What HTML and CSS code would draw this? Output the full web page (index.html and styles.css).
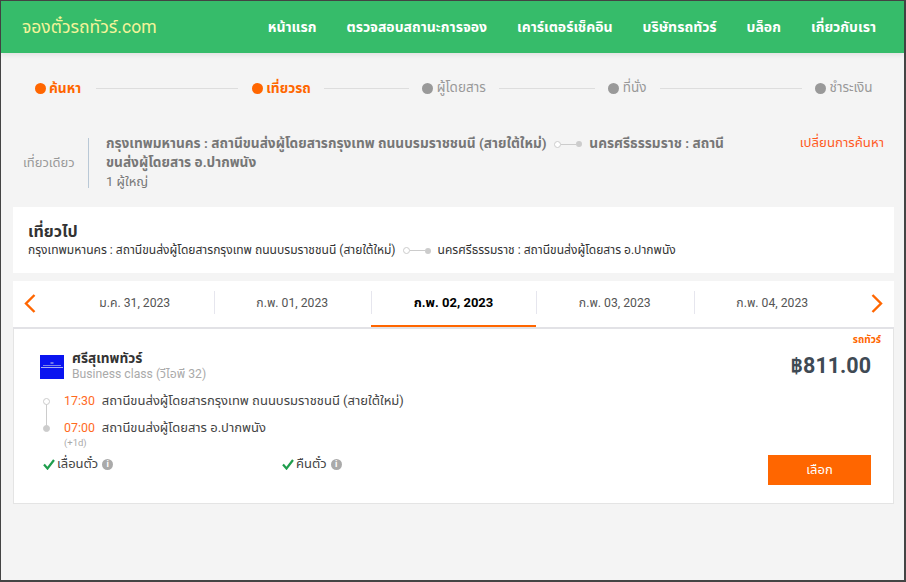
FILE: index.html
```html
<!DOCTYPE html>
<html lang="th">

<head>
    <meta charset="UTF-8">
    <title>จองตั๋วรถทัวร์.com</title>
    <link rel="stylesheet" href="styles.css">
</head>

<body>
    <div class="frame">
        <header class="top-bar">
            <a class="logo">จองตั๋วรถทัวร์.com</a>
            <nav class="menu">
                <a>หน้าแรก</a>
                <a>ตรวจสอบสถานะการจอง</a>
                <a>เคาร์เตอร์เช็คอิน</a>
                <a>บริษัทรถทัวร์</a>
                <a>บล็อก</a>
                <a>เกี่ยวกับเรา</a>
            </nav>
        </header>

        <div class="steps">
            <span class="step active"><i class="dot"></i>ค้นหา</span>
            <span class="step-line line-1"></span>
            <span class="step active"><i class="dot"></i>เที่ยวรถ</span>
            <span class="step-line line-2"></span>
            <span class="step"><i class="dot"></i>ผู้โดยสาร</span>
            <span class="step-line line-3"></span>
            <span class="step"><i class="dot"></i>ที่นั่ง</span>
            <span class="step-line line-4"></span>
            <span class="step"><i class="dot"></i>ชำระเงิน</span>
        </div>

        <div class="summary">
            <div class="trip-type">เที่ยวเดียว</div>
            <div class="trip-info">
                <div class="trip-route">กรุงเทพมหานคร : สถานีขนส่งผู้โดยสารกรุงเทพ ถนนบรมราชชนนี (สายใต้ใหม่) <span class="arrow-line"><i class="hollow"></i><i class="bar"></i><i class="solid"></i></span> นครศรีธรรมราช : สถานีขนส่งผู้โดยสาร อ.ปากพนัง</div>
                <div class="trip-people">1 ผู้ใหญ่</div>
            </div>
            <a class="change-search">เปลี่ยนการค้นหา</a>
        </div>

        <section class="outbound">
            <h2>เที่ยวไป</h2>
            <p>กรุงเทพมหานคร : สถานีขนส่งผู้โดยสารกรุงเทพ ถนนบรมราชชนนี (สายใต้ใหม่) <span class="arrow-line"><i class="hollow"></i><i class="bar"></i><i class="solid"></i></span> นครศรีธรรมราช : สถานีขนส่งผู้โดยสาร อ.ปากพนัง</p>
        </section>

        <div class="dates">
            <button class="chevron prev">
                <svg width="12" height="19" viewBox="0 0 12 19"><path d="M10.5 1 L2 9.5 L10.5 18" fill="none" stroke="#ff6600" stroke-width="2.4"/></svg>
            </button>
            <div class="date-tab">ม.ค. 31, 2023</div>
            <div class="date-tab">ก.พ. 01, 2023</div>
            <div class="date-tab selected">ก.พ. 02, 2023</div>
            <div class="date-tab">ก.พ. 03, 2023</div>
            <div class="date-tab">ก.พ. 04, 2023</div>
            <button class="chevron next">
                <svg width="12" height="19" viewBox="0 0 12 19"><path d="M1.5 1 L10 9.5 L1.5 18" fill="none" stroke="#ff6600" stroke-width="2.4"/></svg>
            </button>
        </div>

        <section class="result">
            <div class="bus-type">รถทัวร์</div>
            <div class="result-head">
                <div class="company">
                    <svg class="company-logo" width="24" height="24" viewBox="0 0 24 24">
                        <rect width="24" height="24" fill="#0a14f0"/>
                        <rect x="10.500" y="7" width="3" height="2" fill="#6f78e8"/>
                        <rect x="3" y="10" width="18" height="1" fill="#7d86ea"/>
                        <rect x="1" y="12" width="22" height="1" fill="#aab0f0"/>
                    </svg>
                    <div>
                        <div class="company-name">ศรีสุเทพทัวร์</div>
                        <div class="company-class">Business class (วีไอพี 32)</div>
                    </div>
                </div>
                <div class="price">฿811.00</div>
            </div>

            <div class="timeline">
                <div class="time-row">
                    <span class="time">17:30</span>
                    <span>สถานีขนส่งผู้โดยสารกรุงเทพ ถนนบรมราชชนนี (สายใต้ใหม่)</span>
                </div>
                <div class="time-row">
                    <span class="time">07:00</span>
                    <span>สถานีขนส่งผู้โดยสาร อ.ปากพนัง</span>
                </div>
                <div class="next-day">(+1d)</div>
            </div>

            <div class="result-foot">
                <div class="perk">
                    <svg width="12" height="11" viewBox="0 0 12 11"><path d="M1 5.5 L4.500 9.500 L11 1" fill="none" stroke="#1f9e4d" stroke-width="2.200"/></svg>
                    เลื่อนตั๋ว <i class="info">i</i>
                </div>
                <div class="perk">
                    <svg width="12" height="11" viewBox="0 0 12 11"><path d="M1 5.5 L4.500 9.500 L11 1" fill="none" stroke="#1f9e4d" stroke-width="2.200"/></svg>
                    คืนตั๋ว <i class="info">i</i>
                </div>
                <button class="select-btn">เลือก</button>
            </div>
        </section>
    </div>
</body>

</html>
```

FILE: styles.css
```css
html,
body {
    margin: 0;
    padding: 0;
    height: 100%;
    overflow: hidden;
}

body {
    font-family: Roboto, "Noto Sans Thai", "Noto Sans", "Liberation Sans", sans-serif;
    font-size: 13px;
    color: #444;
}

.frame {
    height: 100%;
    box-sizing: border-box;
    background-color: #f4f4f4;
    border: solid #444;
    border-width: 1px 2px 2px 1px;
}

.top-bar {
    display: flex;
    align-items: center;
    justify-content: space-between;
    height: 52px;
    padding: 0 28px 0 21px;
    background-color: #36bc6a;
    box-shadow: 0 2px 5px rgba(0, 0, 0, 0.08);
}

.logo {
    font-size: 17.5px;
    color: #f4f49a;
}

.menu {
    display: flex;
    gap: 30px;
}

.menu a {
    font-size: 14px;
    font-weight: bold;
    color: white;
}

/* booking steps */
.steps {
    display: flex;
    align-items: center;
    height: 20px;
    margin-top: 25px;
    padding: 0 33px 0 34px;
    color: #999;
}

.step {
    display: flex;
    align-items: center;
    gap: 4px;
    font-size: 13.5px;
    white-space: nowrap;
}

.step.active {
    gap: 3px;
    color: #ff6600;
    font-size: 13.7px;
    font-weight: bold;
}

.dot {
    width: 11px;
    height: 11px;
    border-radius: 50%;
    background-color: #999;
}

.step.active .dot {
    background-color: #ff6600;
}

.step-line {
    flex: none;
    height: 1px;
    margin: 0 13px;
    background-color: #ddd;
}

.line-1 { width: 142px; margin: 0 14px 0 15px; }
.line-2 { width: 85px; }
.line-3 { width: 96px; }
.line-4 { width: 142px; }

/* search summary */
.summary {
    display: flex;
    align-items: flex-start;
    margin-top: 36px;
    padding: 0 20px 0 22px;
}

.trip-type {
    align-self: center;
    width: 65px;
    font-size: 13px;
    color: #999;
}

.trip-info {
    position: relative;
    width: 630px;
    padding-left: 18px;
}

/* the rule is a little shorter than the three text lines */
.trip-info::before {
    content: '';
    position: absolute;
    left: 0;
    top: 4px;
    bottom: 3px;
    width: 1px;
    background-color: #b9c8d6;
}

.trip-route {
    font-size: 13.65px;
    line-height: 19px;
    font-weight: bold;
    color: #777;
}

.trip-people {
    font-size: 13px;
    line-height: 19px;
    color: #777;
}

.change-search {
    margin: -1px 0 0 auto;
    font-size: 13.2px;
    color: #ff5a1f;
}

.arrow-line {
    display: inline-flex;
    align-items: center;
    margin: 0 4px;
    vertical-align: middle;
}

.arrow-line .hollow {
    width: 5px;
    height: 5px;
    border: 1px solid #ccc;
    border-radius: 50%;
    background-color: white;
}

.arrow-line .bar {
    width: 15px;
    height: 1px;
    background-color: #ccc;
}

.arrow-line .solid {
    width: 6px;
    height: 6px;
    border-radius: 50%;
    background-color: #ccc;
}

/* outbound card */
.outbound {
    margin: 16px 10px 0 12px;
    padding: 15px 15px 0;
    height: 51px;
    background-color: white;
}

.outbound h2 {
    margin: 0;
    font-size: 16px;
    line-height: 19px;
    color: #333;
}

.outbound p {
    margin: 0;
    font-size: 12.05px;
    line-height: 18px;
    color: #333;
}

/* date strip */
.dates {
    display: flex;
    align-items: stretch;
    height: 46px;
    margin: 8px 10px 0 12px;
    background-color: white;
    border-bottom: 2px solid #e2e2e6;
}

.chevron {
    display: flex;
    align-items: center;
    width: 43px;
    padding: 0 11px 2px;
    border: none;
    background: none;
}

.chevron.next {
    justify-content: flex-end;
}

.date-tab {
    flex: 1;
    display: flex;
    align-items: center;
    justify-content: center;
    position: relative;
    border-bottom: 2px solid transparent;
    font-size: 12.2px;
    color: #555;
}

/* separator between tabs */
.date-tab + .date-tab::before {
    content: '';
    position: absolute;
    left: 0;
    top: 10px;
    height: 23px;
    width: 1px;
    background-color: #e6e6ee;
}

.date-tab.selected {
    flex: 0 0 165px;
    font-size: 13px;
    font-weight: bold;
    color: black;
    border-bottom-color: #ff6600;
}

/* result card */
.result {
    height: 175px;
    box-sizing: border-box;
    margin: 0 10px 0 12px;
    padding: 4px 12px 0 26px;
    background-color: white;
    border: 1px solid #e4e4e4;
    border-top: none;
}

.bus-type {
    text-align: right;
    font-size: 10px;
    line-height: 14px;
    font-weight: bold;
    color: #ff6600;
}

.result-head {
    display: flex;
    justify-content: space-between;
    align-items: center;
    margin-top: 3px;
    padding-right: 10px;
}

.company {
    display: flex;
    align-items: center;
    gap: 8px;
}

.company-name {
    font-size: 13.6px;
    line-height: 15px;
    font-weight: bold;
    color: #333;
}

.company-class {
    font-size: 12.2px;
    line-height: 17px;
    color: #aaa;
}

.price {
    font-size: 21.5px;
    font-weight: bold;
    color: #3f4a54;
}

.timeline {
    margin-top: 4px;
    padding-left: 24px;
    font-size: 13px;
    color: #444;
    position: relative;
}

/* stop markers on the left of the times */
.timeline::before {
    content: '';
    position: absolute;
    left: 6px;
    top: 16px;
    width: 1px;
    height: 26px;
    background-color: #ccc;
}

.time-row {
    display: flex;
    gap: 7px;
    line-height: 27px;
    position: relative;
}

.time-row::before {
    content: '';
    position: absolute;
    left: -21px;
    top: 11px;
    width: 5px;
    height: 5px;
    border: 1px solid #ccc;
    border-radius: 50%;
    background-color: white;
}

.time-row + .time-row::before {
    background-color: #ccc;
}

.time {
    font-size: 12.4px;
    color: #ff6a1f;
}

.next-day {
    margin-top: -5px;
    font-size: 9.5px;
    line-height: 13px;
    color: #aaa;
}

.result-foot {
    display: flex;
    align-items: flex-start;
    margin-top: 6px;
    padding: 0 10px 0 3px;
}

.perk {
    display: flex;
    align-items: center;
    gap: 2px;
    width: 239px;
    font-size: 13px;
    line-height: 18px;
    color: #444;
}

.info {
    width: 11px;
    height: 11px;
    margin-left: 2px;
    border-radius: 50%;
    background-color: #aaa;
    color: white;
    font-size: 9px;
    font-style: normal;
    font-weight: bold;
    line-height: 11px;
    text-align: center;
}

.select-btn {
    width: 103px;
    height: 30px;
    margin-left: auto;
    border: none;
    background-color: #ff6600;
    color: white;
    font-family: inherit;
    font-size: 13px;
}
```
